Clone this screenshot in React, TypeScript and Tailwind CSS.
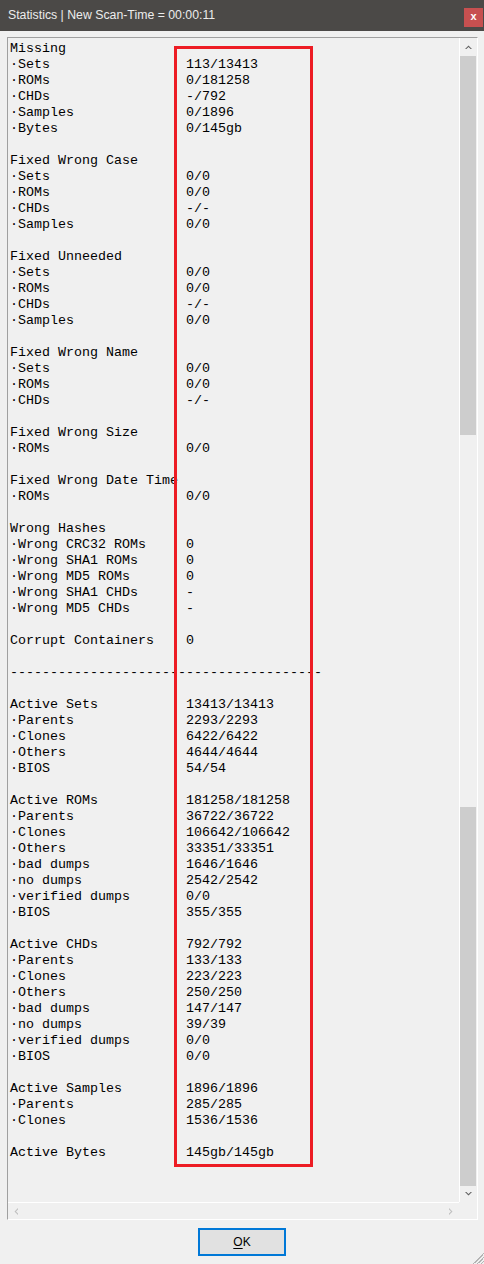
import React from "react";

type Row = [string, string] | null;

const rows: Row[] = [
  ["Missing", ""],
  ["·Sets", "113/13413"],
  ["·ROMs", "0/181258"],
  ["·CHDs", "-/792"],
  ["·Samples", "0/1896"],
  ["·Bytes", "0/145gb"],
  null,
  ["Fixed Wrong Case", ""],
  ["·Sets", "0/0"],
  ["·ROMs", "0/0"],
  ["·CHDs", "-/-"],
  ["·Samples", "0/0"],
  null,
  ["Fixed Unneeded", ""],
  ["·Sets", "0/0"],
  ["·ROMs", "0/0"],
  ["·CHDs", "-/-"],
  ["·Samples", "0/0"],
  null,
  ["Fixed Wrong Name", ""],
  ["·Sets", "0/0"],
  ["·ROMs", "0/0"],
  ["·CHDs", "-/-"],
  null,
  ["Fixed Wrong Size", ""],
  ["·ROMs", "0/0"],
  null,
  ["Fixed Wrong Date Time", ""],
  ["·ROMs", "0/0"],
  null,
  ["Wrong Hashes", ""],
  ["·Wrong CRC32 ROMs", "0"],
  ["·Wrong SHA1 ROMs", "0"],
  ["·Wrong MD5 ROMs", "0"],
  ["·Wrong SHA1 CHDs", "-"],
  ["·Wrong MD5 CHDs", "-"],
  null,
  ["Corrupt Containers", "0"],
  null,
  ["---------------------------------------", ""],
  null,
  ["Active Sets", "13413/13413"],
  ["·Parents", "2293/2293"],
  ["·Clones", "6422/6422"],
  ["·Others", "4644/4644"],
  ["·BIOS", "54/54"],
  null,
  ["Active ROMs", "181258/181258"],
  ["·Parents", "36722/36722"],
  ["·Clones", "106642/106642"],
  ["·Others", "33351/33351"],
  ["·bad dumps", "1646/1646"],
  ["·no dumps", "2542/2542"],
  ["·verified dumps", "0/0"],
  ["·BIOS", "355/355"],
  null,
  ["Active CHDs", "792/792"],
  ["·Parents", "133/133"],
  ["·Clones", "223/223"],
  ["·Others", "250/250"],
  ["·bad dumps", "147/147"],
  ["·no dumps", "39/39"],
  ["·verified dumps", "0/0"],
  ["·BIOS", "0/0"],
  null,
  ["Active Samples", "1896/1896"],
  ["·Parents", "285/285"],
  ["·Clones", "1536/1536"],
  null,
  ["Active Bytes", "145gb/145gb"],
];

function Chevron({ dir, color }: { dir: "up" | "down" | "left" | "right"; color: string }) {
  const paths: Record<string, string> = {
    up: "M0 4 L3.5 0.5 L7 4 L5.6 4 L3.5 2 L1.4 4 Z",
    down: "M0 0 L3.5 3.5 L7 0 L5.6 0 L3.5 2 L1.4 0 Z",
    left: "M4 0 L0.5 3.5 L4 7 L4 5.6 L2 3.5 L4 1.4 Z",
    right: "M0 0 L3.5 3.5 L0 7 L0 5.6 L2 3.5 L0 1.4 Z",
  };
  const vertical = dir === "up" || dir === "down";
  return (
    <svg width={vertical ? 7 : 4} height={vertical ? 4 : 7} viewBox={vertical ? "0 0 7 4" : "0 0 4 7"}>
      <path d={paths[dir]} fill={color} />
    </svg>
  );
}

export default function App() {
  return (
    <div className="relative w-[484px] h-[1264px] overflow-hidden bg-[#f0f0f0] flex flex-col">
      {/* Title bar */}
      <div className="h-[31px] bg-[#4b4947] flex items-start shrink-0">
        <div
          className="pl-[8px] pt-[7px] text-[12.3px] leading-[16px] text-[#ececec]"
          style={{ fontFamily: '"Liberation Sans", Arial, sans-serif' }}
        >
          Statistics | New Scan-Time = 00:00:11
        </div>
        <div className="ml-auto mr-[1px] mt-[8px] w-[19px] h-[19px] bg-[#c75050] flex items-center justify-center">
          <span
            className="text-white text-[11px] font-bold leading-none -mt-[2px]"
            style={{ fontFamily: '"Liberation Sans", Arial, sans-serif' }}
          >
            x
          </span>
        </div>
      </div>

      {/* Content box */}
      <div className="pt-[6px] pl-[7px]">
        <div className="w-[471px] h-[1183px] border-t border-l border-t-[#a0a0a0] border-l-[#a0a0a0] border-r border-b border-r-white border-b-white flex flex-col">
          <div className="flex flex-1 min-h-0">
            {/* Text area */}
            <div
              className="w-[451px] pl-[2px] pt-[3px] text-[13.33px] text-black overflow-hidden"
              style={{ fontFamily: '"Liberation Mono", "Courier New", monospace' }}
            >
              {rows.map((r, i) =>
                r === null ? (
                  <div key={i} className="h-[16px]" />
                ) : (
                  <div key={i} className="h-[16px] leading-[16px] flex whitespace-pre">
                    <span className="w-[176px] shrink-0">{r[0]}</span>
                    <span>{r[1]}</span>
                  </div>
                )
              )}
            </div>
            <div className="w-[1px] bg-white" />
            {/* Vertical scrollbar */}
            <div className="w-[16px] flex flex-col">
              <div className="h-[18px] flex items-center justify-center">
                <Chevron dir="up" color="#606060" />
              </div>
              <div className="h-[379px] bg-[#cdcdcd]" />
              <div className="flex-1" />
              <div className="h-[379px] bg-[#cdcdcd]" />
              <div className="h-[16px] flex items-center justify-center">
                <Chevron dir="down" color="#606060" />
              </div>
            </div>
          </div>
          <div className="h-[1px] w-[451px] bg-white" />
          {/* Horizontal scrollbar */}
          <div className="h-[16px] w-[451px] flex items-center justify-between px-[6px]">
            <Chevron dir="left" color="#bfbfbf" />
            <Chevron dir="right" color="#bfbfbf" />
          </div>
        </div>
      </div>

      {/* Button row */}
      <div className="flex justify-center pt-[8px]">
        <div
          className="w-[88px] h-[28px] border-2 border-[#0078d7] bg-[#e1e1e1] flex items-center justify-center text-[12px] text-black"
          style={{ fontFamily: '"Liberation Sans", Arial, sans-serif' }}
        >
          <span>
            <span className="underline underline-offset-2">O</span>K
          </span>
        </div>
      </div>

      {/* Resize grip */}
      <svg className="absolute right-0 bottom-0" width="12" height="12" viewBox="0 0 12 12">
        <path d="M11 3 L3 11 M11 7 L7 11 M12 1 L1 12 M12 5 L5 12 M12 9 L9 12" stroke="#b4b4b4" strokeWidth="1" />
      </svg>

      {/* Red annotation rectangle */}
      <div className="absolute left-[174px] top-[46px] w-[139px] h-[1121px] border-[3px] border-[#ed1c24] pointer-events-none" />
    </div>
  );
}
